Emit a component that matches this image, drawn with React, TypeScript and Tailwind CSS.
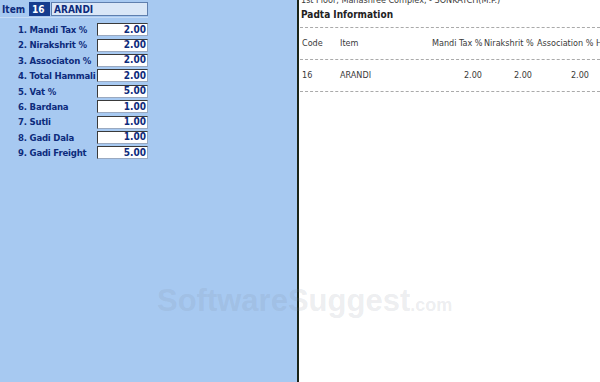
import React from "react";

const rows = [
  ["1. Mandi Tax %", "2.00"],
  ["2. Nirakshrit %", "2.00"],
  ["3. Associaton %", "2.00"],
  ["4. Total Hammali", "2.00"],
  ["5. Vat %", "5.00"],
  ["6. Bardana", "1.00"],
  ["7. Sutli", "1.00"],
  ["8. Gadi Dala", "1.00"],
  ["9. Gadi Freight", "5.00"],
];

const cols = "grid grid-cols-[38px_92px_52px_53px_59px_20px] whitespace-nowrap leading-[14px]";
const condensed = { fontFamily: "'DejaVu Sans Condensed', 'Liberation Sans Narrow', 'Liberation Sans', sans-serif" };

export default function App() {
  return (
    <div className="relative flex h-[382px] w-[600px] overflow-hidden bg-white" style={condensed}>
      <div className="h-full w-[297px] bg-[#a7c9f1] text-[#0d2b7c]">
        <div className="flex h-[18px] w-[148px] items-center border-b border-[#c6dbf5] pt-[1px]">
          <span className="ml-[2px] w-[27px] text-[10px] font-bold">Item</span>
          <span className="flex h-[14px] w-[21px] items-center bg-[#163c8e] pl-[3px] text-[10px] font-bold text-white">16</span>
          <span className="ml-[1px] flex h-[14px] flex-1 items-center border border-[#5f7fae] bg-[#dae7f7] pl-[2px] text-[10px] font-bold">ARANDI</span>
        </div>
        <div className="flex flex-col gap-[2px] pt-[5px]">
          {rows.map(([label, val]) => (
            <div key={label} className="flex h-[13.4px] w-[148px] items-center">
              <span className="ml-[18px] w-[79px] whitespace-nowrap text-[9.5px] font-bold leading-none tracking-[-0.2px]">{label}</span>
              <span className="flex h-[13px] w-[51px] items-center justify-end border border-t-[#3a3a3a] border-l-[#3a3a3a] border-b-[#9aa9c0] border-r-[#9aa9c0] bg-white pr-[1px] text-[10px] font-bold leading-none">{val}</span>
            </div>
          ))}
        </div>
      </div>
      <div className="h-full w-[3px] border-l-2 border-[#1a2418]"></div>
      <div className="flex-1 overflow-hidden text-[9px] text-[#3a3a3a]">
        <div className="-mt-[7px] ml-[1px] h-[14px] whitespace-nowrap leading-[14px]">1st Floor, Mahashree Complex, - SONKATCH(M.P.)</div>
        <div className="ml-[1px] mt-[1px] h-[14px] text-[10px] font-bold leading-[14px] text-[#222]">Padta Information</div>
        <div className="mt-[5px] border-t border-dashed border-[#aaa]"></div>
        <div className={`${cols} mt-[8px] h-[14px] pl-[2px]`}>
          <span>Code</span>
          <span>Item</span>
          <span>Mandi Tax %</span>
          <span>Nirakshrit %</span>
          <span>Association %</span>
          <span>H</span>
        </div>
        <div className="mt-[9px] border-t border-dashed border-[#aaa]"></div>
        <div className={`${cols} mt-[8px] h-[14px] pl-[2px]`}>
          <span>16</span>
          <span>ARANDI</span>
          <span className="pr-[2px] text-right">2.00</span>
          <span className="pr-[5px] text-right">2.00</span>
          <span className="pr-[7px] text-right">2.00</span>
          <span></span>
        </div>
        <div className="mt-[9px] border-t border-dashed border-[#aaa]"></div>
      </div>
      <div className="pointer-events-none absolute left-[157px] top-[285px] flex items-baseline whitespace-nowrap font-bold text-[rgba(120,130,150,0.15)]" style={{ fontFamily: "'Liberation Sans', Arial, sans-serif" }}>
        <span className="text-[31px] leading-none">SoftwareSuggest</span>
        <span className="text-[18px] leading-none">.com</span>
      </div>
    </div>
  );
}
